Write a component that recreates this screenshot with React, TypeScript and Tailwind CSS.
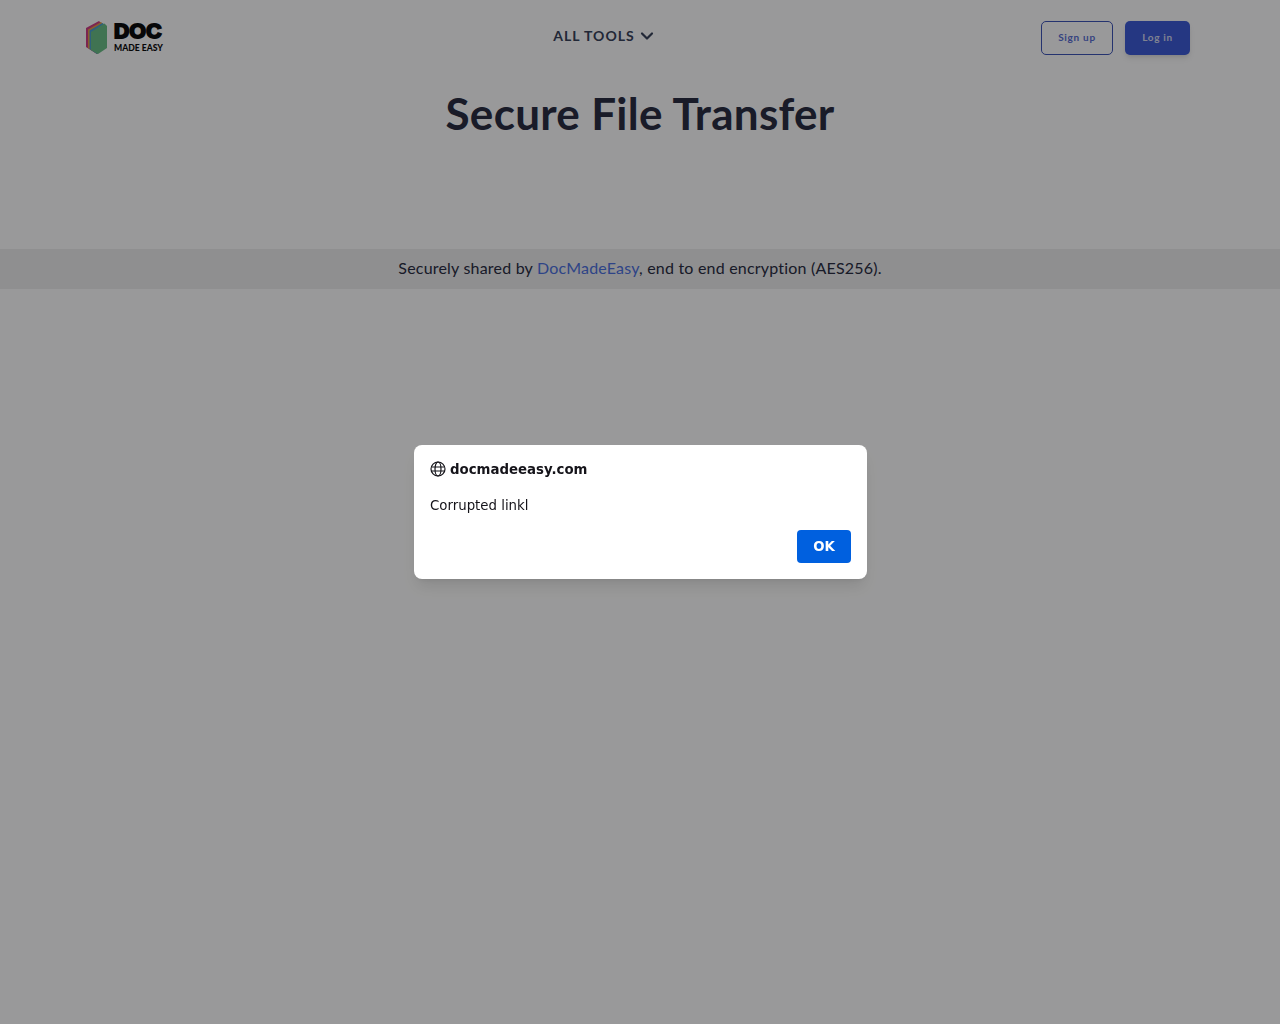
import React from "react";

const nunito = "font-['Lato','Noto_Sans',sans-serif]";

function Logo() {
  return (
    <div className="flex items-center gap-[7px]">
      <svg width="21" height="36" viewBox="0 0 21 36" className="block">
        <path d="M0 10 L13 3 L15 5 L15 30 L11 36 L0 29 Z" fill="#cf3f86" />
        <path d="M2 11.5 L15 4 L17 6 L17 30 L11 36 L2 30 Z" fill="#e89a4a" />
        <path d="M3.5 12.5 L16.5 5 L18.5 6.5 L18.5 30 L11 36 L3.5 31 Z" fill="#4ba0d0" />
        <path d="M5 14 L18.5 5.5 L21 8 L21 30 L12 36 L5 32 Z" fill="#6cc088" />
      </svg>
      <div className="flex flex-col items-start mt-[1px]">
        <span className="font-['Liberation_Sans',sans-serif] font-black text-[21px] leading-[20px] tracking-[0.4px] text-[#0c0c0d] [-webkit-text-stroke:2px_#0c0c0d]">DOC</span>
        <span className="font-['Lato',sans-serif] font-black text-[8.6px] leading-[10px] text-[#0c0c0d] mt-[2px]">MADE EASY</span>
      </div>
    </div>
  );
}

export default function App() {
  return (
    <div className={`relative min-h-[1024px] bg-white ${nunito} text-[#1f2233]`}>
      <header className="flex h-[72px] items-center justify-between pl-[86px] pr-[90px]">
        <Logo />
        <div className="mb-[1px] ml-[3px] flex items-center gap-[5px] text-[14px] font-bold tracking-[1px] text-[#39435a]">
          ALL TOOLS
          <svg width="14" height="14" viewBox="0 0 14 14" fill="none" stroke="#39435a" strokeWidth="2.2" strokeLinecap="round" strokeLinejoin="round">
            <path d="M2 4.5 L7 9.5 L12 4.5" />
          </svg>
        </div>
        <div className="flex items-center gap-3 mt-[4px]">
          <button className="h-[34px] w-[72px] rounded-[5px] border border-[#3f56b8] pb-[1px] text-[10px] font-bold tracking-[0.7px] text-[#5a70d4]">Sign up</button>
          <button className="h-[34px] w-[65px] rounded-[5px] bg-[#3f5cd8] pb-[1px] text-[10px] font-bold tracking-[0.7px] text-[#d5daf0] shadow-md">Log in</button>
        </div>
      </header>
      <h1 className="mt-[13px] text-center text-[44px] leading-[56px] font-bold tracking-[0.3px] text-[#2a2d42]">Secure File Transfer</h1>
      <div className="mt-[108px] flex h-[40px] items-center justify-center bg-[#eeeeee] pb-[2px] text-[16px] tracking-[0.2px] text-[#2a2d42]">
        <span>Securely shared by <span className="text-[#4d72e0]">DocMadeEasy</span>, end to end encryption (AES256).</span>
      </div>

      <div className="fixed inset-0 bg-[#000002]/40" />

      <div className="fixed left-[414px] top-[445px] w-[453px] rounded-[8px] bg-white p-4 font-['DejaVu_Sans',sans-serif] shadow-lg">
        <div className="flex h-[16px] items-center gap-[4px] text-[13.33px] font-bold text-[#15141a]">
          <svg width="16" height="16" viewBox="0 0 16 16" fill="none" stroke="#15141a" strokeWidth="1.2">
            <circle cx="8" cy="8" r="7" />
            <ellipse cx="8" cy="8" rx="3" ry="7" />
            <path d="M1.4 6 H14.6 M1.4 10 H14.6" />
          </svg>
          <span className="translate-y-[1px]">docmadeeasy.com</span>
        </div>
        <p className="mt-[21px] h-[16px] text-[13.33px] leading-[16px] text-[#15141a]">Corrupted linkl</p>
        <div className="mt-[16px] flex justify-end">
          <button className="h-[33px] w-[54px] rounded-[4px] bg-[#0060df] text-[13.33px] font-bold text-white">OK</button>
        </div>
      </div>
    </div>
  );
}
